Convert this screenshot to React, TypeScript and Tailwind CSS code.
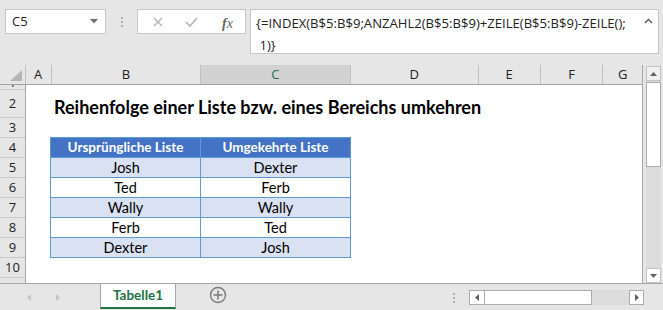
import React from "react";

const cols = [
  { l: "A", w: 25 },
  { l: "B", w: 150 },
  { l: "C", w: 150, sel: true },
  { l: "D", w: 128 },
  { l: "E", w: 62 },
  { l: "F", w: 62 },
  { l: "G", w: 39, last: true },
];

const rows: { n: string; h: number }[] = [
  { n: "1", h: 5 },
  { n: "2", h: 28 },
  { n: "3", h: 20 },
  { n: "4", h: 20 },
  { n: "5", h: 20 },
  { n: "6", h: 20 },
  { n: "7", h: 20 },
  { n: "8", h: 20 },
  { n: "9", h: 20 },
  { n: "10", h: 20 },
  { n: "", h: 5 },
];

const data = [
  ["Josh", "Dexter"],
  ["Ted", "Ferb"],
  ["Wally", "Wally"],
  ["Ferb", "Ted"],
  ["Dexter", "Josh"],
];

function Dots() {
  return (
    <div className="flex flex-col gap-[2px]">
      <div className="w-[2px] h-[2px] bg-[#b0b0b0]" />
      <div className="w-[2px] h-[2px] bg-[#b0b0b0]" />
      <div className="w-[2px] h-[2px] bg-[#b0b0b0]" />
    </div>
  );
}

export default function App() {
  const ui = { fontFamily: '"Open Sans", "Noto Sans", sans-serif' };
  const cell = { fontFamily: 'Lato, "Liberation Sans", sans-serif' };
  return (
    <div className="w-[663px] h-[310px] bg-[#e6e6e6] overflow-hidden flex flex-col text-[#222]" style={ui}>
      {/* Top formula area */}
      <div className="h-[65px] flex items-start pt-[9px] pl-[5px] shrink-0">
        <div className="w-[101px] h-[25px] bg-white border border-[#c6c6c6] flex items-center justify-between pl-[6px] pr-[7px]">
          <span className="text-[13px] leading-none">C5</span>
          <svg width="8" height="5" viewBox="0 0 8 5">
            <path d="M0 0 L8 0 L4 4.5 Z" fill="#707070" />
          </svg>
        </div>
        <div className="w-[31px] h-[25px] flex items-center justify-center">
          <Dots />
        </div>
        <div className="w-[109px] h-[25px] bg-white border border-[#c6c6c6] relative">
          <svg className="absolute left-[15px] top-[7px]" width="10" height="10" viewBox="0 0 10 10">
            <path d="M1 1 L9 9 M9 1 L1 9" stroke="#b4b4b4" strokeWidth="1.4" />
          </svg>
          <svg className="absolute left-[47px] top-[7px]" width="13" height="10" viewBox="0 0 13 10">
            <path d="M1 5 L5 9 L12 1" stroke="#b4b4b4" strokeWidth="1.6" fill="none" />
          </svg>
          <span
            className="absolute left-[84px] top-[3px] text-[14px] italic text-[#666]"
            style={{ fontFamily: '"Liberation Serif", serif' }}
          >
            <span className="font-bold">f</span>x
          </span>
        </div>
        <div className="ml-[4px] w-[409px] h-[45px] bg-white border border-[#c6c6c6] relative pl-[5px] pt-[2px]">
          <div className="text-[13.1px] leading-[22px] whitespace-pre text-[#222]">
            {"{=INDEX(B$5:B$9;ANZAHL2(B$5:B$9)+ZEILE(B$5:B$9)-ZEILE();"}
          </div>
          <div className="text-[13.1px] leading-[22px] whitespace-pre text-[#222]">{" 1)}"}</div>
          <svg className="absolute right-[5px] top-[8px]" width="9" height="6" viewBox="0 0 9 6">
            <path d="M1 5 L4.5 1.5 L8 5" stroke="#555" strokeWidth="1.3" fill="none" />
          </svg>
        </div>
      </div>

      {/* Main */}
      <div className="flex h-[218px] shrink-0">
        <div className="w-[643px] border-r border-[#a6a6a6] flex flex-col">
          {/* column header */}
          <div className="h-[20px] flex border-b border-[#a0a0a0] shrink-0">
            <div className="w-[26px] border-r border-[#c0c0c0] relative">
              <svg className="absolute left-[10px] top-[5px]" width="13" height="12" viewBox="0 0 13 12">
                <path d="M12 0 L12 11 L0 11 Z" fill="#b5b5b5" />
              </svg>
            </div>
            {cols.map((c) => (
              <div
                key={c.l}
                className={`flex items-center justify-center text-[13px] leading-none ${
                  c.last ? "" : "border-r border-[#c0c0c0]"
                } ${c.sel ? "bg-[#d2d2d2] text-[#217346]" : ""}`}
                style={{ width: c.w + (c.last ? 0 : 1) }}
              >
                {c.l}
              </div>
            ))}
          </div>
          {/* body */}
          <div className="flex h-[198px] overflow-hidden">
            <div className="w-[26px] border-r border-[#a6a6a6] flex flex-col shrink-0">
              {rows.map((r, i) => (
                <div
                  key={i}
                  className={`flex justify-center overflow-hidden text-[13px] shrink-0 ${
                    r.h === 5 && r.n ? "items-end leading-[13px]" : "items-center leading-none"
                  } ${r.n ? "border-b border-[#c8c8c8]" : ""}`}
                  style={{ height: r.h }}
                >
                  {r.n}
                </div>
              ))}
            </div>
            <div className="flex-1 bg-white flex flex-col" style={cell}>
              <div className="h-[5px] shrink-0" />
              <div className="h-[28px] shrink-0 flex items-end pl-[28px] pb-[2px]">
                <span className="text-[18px] font-bold text-black leading-none whitespace-nowrap">
                  Reihenfolge einer Liste bzw. eines Bereichs umkehren
                </span>
              </div>
              <div className="h-[19px] shrink-0" />
              <div className="ml-[24px] w-[301px] border-t border-l border-[#5b9bd5] flex flex-col">
                <div className="flex h-[20px] bg-[#4472c4] border-b border-[#5b9bd5]">
                  <div className="w-[150px] border-r border-[#5b9bd5] flex items-center justify-center text-white font-bold text-[13.5px]">
                    Ursprüngliche Liste
                  </div>
                  <div className="w-[150px] border-r border-[#5b9bd5] flex items-center justify-center text-white font-bold text-[13.5px]">
                    Umgekehrte Liste
                  </div>
                </div>
                {data.map((d, i) => (
                  <div
                    key={i}
                    className={`flex h-[20px] border-b border-[#5b9bd5] ${i % 2 === 0 ? "bg-[#d9e1f2]" : "bg-white"}`}
                  >
                    <div className="w-[150px] border-r border-[#5b9bd5] flex items-center justify-center text-[14.5px] text-black">
                      {d[0]}
                    </div>
                    <div className="w-[150px] border-r border-[#5b9bd5] flex items-center justify-center text-[14.5px] text-black">
                      {d[1]}
                    </div>
                  </div>
                ))}
              </div>
            </div>
          </div>
        </div>
        {/* vertical scrollbar */}
        <div className="w-[20px] pl-[3px] pr-[2px] flex flex-col">
          <div className="h-[15px] mt-[1px] bg-[#f0f0f0] border border-[#c2c2c2] flex items-center justify-center">
            <svg width="7" height="4" viewBox="0 0 7 4">
              <path d="M0 4 L3.5 0 L7 4 Z" fill="#606060" />
            </svg>
          </div>
          <div className="flex-1 bg-[#dcdcdc] flex flex-col pt-[1px]">
            <div className="h-[85px] bg-white border border-[#ababab]" />
          </div>
          <div className="h-[15px] bg-white border border-[#c2c2c2] flex items-center justify-center">
            <svg width="7" height="4" viewBox="0 0 7 4">
              <path d="M0 0 L7 0 L3.5 4 Z" fill="#606060" />
            </svg>
          </div>
        </div>
      </div>

      {/* Tab bar */}
      <div className="flex-1 border-t border-[#a6a6a6] flex items-start relative">
        <div className="w-[100px] h-[26px] flex items-center">
          <svg className="ml-[27px]" width="4" height="7" viewBox="0 0 4 7">
            <path d="M4 0 L0 3.5 L4 7 Z" fill="#c4c4c4" />
          </svg>
          <svg className="ml-[25px]" width="4" height="7" viewBox="0 0 4 7">
            <path d="M0 0 L4 3.5 L0 7 Z" fill="#c4c4c4" />
          </svg>
        </div>
        <div className="w-[76px] h-[25px] bg-white border-l border-r border-[#a6a6a6] border-b-2 border-b-[#217346] flex items-center justify-center">
          <span className="text-[13.5px] font-bold text-[#217346]" style={{ fontFamily: 'Lato, "Liberation Sans", sans-serif' }}>
            Tabelle1
          </span>
        </div>
        <div className="ml-[33px] mt-[2px]">
          <svg width="18" height="18" viewBox="0 0 18 18">
            <circle cx="9" cy="9" r="7.5" stroke="#7a7a7a" strokeWidth="1.4" fill="none" />
            <path d="M9 4.5 V13.5 M4.5 9 H13.5" stroke="#7a7a7a" strokeWidth="1.5" />
          </svg>
        </div>
        <div className="ml-[226px] mt-[9px]">
          <Dots />
        </div>
        <div className="ml-[14px] mt-[6px] h-[15px] flex">
          <div className="w-[16px] h-[15px] bg-white border border-[#ababab] flex items-center justify-center">
            <svg width="4" height="7" viewBox="0 0 4 7">
              <path d="M4 0 L0 3.5 L4 7 Z" fill="#606060" />
            </svg>
          </div>
          <div className="w-[107px] h-[15px] bg-white border-t border-b border-r border-[#ababab]" />
          <div className="w-[37px] h-[15px] bg-[#dcdcdc]" />
          <div className="w-[15px] h-[15px] bg-white border border-[#ababab] flex items-center justify-center">
            <svg width="4" height="7" viewBox="0 0 4 7">
              <path d="M0 0 L4 3.5 L0 7 Z" fill="#606060" />
            </svg>
          </div>
        </div>
      </div>
    </div>
  );
}
